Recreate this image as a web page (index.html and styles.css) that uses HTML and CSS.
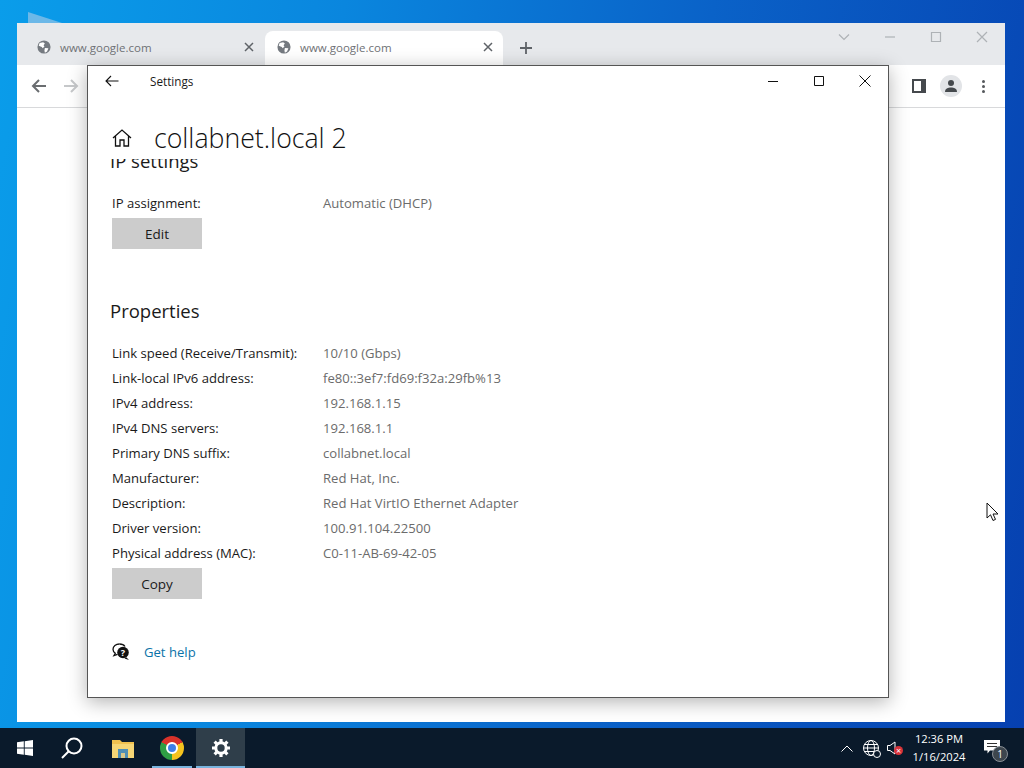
FILE: index.html
```html
<!DOCTYPE html>
<html lang="en">
<head>
    <meta charset="UTF-8">
    <meta name="viewport" content="width=device-width, initial-scale=1.0">
    <title>Settings - collabnet.local 2</title>
    <link rel="stylesheet" href="styles.css">
</head>
<body>

    <div class="desktop">
        <div class="wallpaper-shard"></div>

        <!-- Browser behind settings -->
        <div class="browser">
            <div class="tabstrip">
                <div class="tab">
                    <svg class="favicon" viewBox="0 0 16 16"><circle cx="8" cy="8" r="7.5" fill="#757a80"/><path d="M3 3.5 7 2.5 9 4 7.5 6 8.5 7.5 6.5 9.5 5.5 8 2 6.5ZM9 9 13 9.500 11.500 13 9 14.500 8.500 12Z" fill="#fff"/></svg>
                    <span class="tab-title">www.google.com</span>
                    <svg class="tab-close" viewBox="0 0 10 10"><path d="M1 1 9 9M9 1 1 9"/></svg>
                </div>
                <div class="tab tab-active">
                    <svg class="favicon" viewBox="0 0 16 16"><circle cx="8" cy="8" r="7.500" fill="#757a80"/><path d="M3 3.500 7 2.500 9 4 7.500 6 8.500 7.500 6.500 9.500 5.500 8 2 6.500ZM9 9 13 9.500 11.500 13 9 14.500 8.500 12Z" fill="#fff"/></svg>
                    <span class="tab-title">www.google.com</span>
                    <svg class="tab-close" viewBox="0 0 10 10"><path d="M1 1 9 9M9 1 1 9"/></svg>
                </div>
                <svg class="new-tab" viewBox="0 0 12 12"><path d="M6 0V12M0 6H12"/></svg>
                <div class="browser-controls">
                    <svg class="ctl" viewBox="0 0 12 12"><path d="M1 3.500 6 8.500 11 3.500"/></svg>
                    <svg class="ctl" viewBox="0 0 12 12"><path d="M1 6H11"/></svg>
                    <svg class="ctl" viewBox="0 0 12 12"><path d="M1.500 1.500H10.500V10.500H1.500Z"/></svg>
                    <svg class="ctl" viewBox="0 0 12 12"><path d="M1 1 11 11M11 1 1 11"/></svg>
                </div>
            </div>
            <div class="toolbar">
                <svg class="nav-arrow" viewBox="0 0 16 16"><path d="M15 8H2M8 2 2 8 8 14"/></svg>
                <svg class="nav-arrow nav-off" viewBox="0 0 16 16"><path d="M1 8H14M8 2 14 8 8 14"/></svg>
                <div class="toolbar-right">
                    <svg class="side-panel" viewBox="0 0 14 14"><path d="M0 0H14V14H0ZM2 2V12H9V2Z" fill-rule="evenodd"/></svg>
                    <div class="avatar">
                        <svg viewBox="0 0 14 14"><circle cx="7" cy="4" r="3"/><path d="M1 13C1 9.500 4 8.500 7 8.500S13 9.500 13 13Z"/></svg>
                    </div>
                    <div class="kebab"><i></i><i></i><i></i></div>
                </div>
            </div>
            <div class="browser-page"></div>
        </div>

        <!-- Settings window -->
        <div class="settings">
            <div class="titlebar">
                <svg class="title-back" viewBox="0 0 14 12"><path d="M13.500 6H1M6 1 1 6 6 11"/></svg>
                <span class="title-text">Settings</span>
                <div class="window-controls">
                    <svg viewBox="0 0 12 12"><path d="M1 6.500H11"/></svg>
                    <svg viewBox="0 0 12 12"><path d="M1.500 1.500H10.500V10.500H1.500Z"/></svg>
                    <svg viewBox="0 0 12 12"><path d="M.5.500 11.500 11.500M11.500.500.500 11.500"/></svg>
                </div>
            </div>
            <div class="page-header">
                <svg class="home-icon" viewBox="0 0 20 20"><path d="M1 10 10 2 19 10M3.500 8V18H8V12H12V18H16.500V8"/></svg>
                <h1>collabnet.local 2</h1>
            </div>
            <div class="scroller">
                <h2 class="section-clipped">IP settings</h2>
                <div class="rows">
                    <span>IP assignment:</span><span class="val">Automatic (DHCP)</span>
                </div>
                <button class="btn">Edit</button>

                <h2 class="section-props">Properties</h2>
                <div class="rows">
                    <span>Link speed (Receive/Transmit):</span><span class="val">10/10 (Gbps)</span>
                    <span>Link-local IPv6 address:</span><span class="val">fe80::3ef7:fd69:f32a:29fb%13</span>
                    <span>IPv4 address:</span><span class="val">192.168.1.15</span>
                    <span>IPv4 DNS servers:</span><span class="val">192.168.1.1</span>
                    <span>Primary DNS suffix:</span><span class="val">collabnet.local</span>
                    <span>Manufacturer:</span><span class="val">Red Hat, Inc.</span>
                    <span>Description:</span><span class="val">Red Hat VirtIO Ethernet Adapter</span>
                    <span>Driver version:</span><span class="val">100.91.104.22500</span>
                    <span>Physical address (MAC):</span><span class="val">C0-11-AB-69-42-05</span>
                </div>
                <button class="btn">Copy</button>

                <div class="help">
                    <svg class="help-icon" viewBox="0 0 18 18"><path d="M7.500 1C3.800 1 1 3.300 1 6.300 1 8 1.900 9.400 3.300 10.300L2 12.500 5.500 11.300" fill="none" stroke="#111" stroke-width="1.300"/><path d="M7.500 1C10 1 12 2 13 3.500" fill="none" stroke="#111" stroke-width="1.300"/><circle cx="11" cy="9.500" r="5.800" fill="#111"/><path d="M14 14 17 17 12.500 15.500Z" fill="#111"/><text x="11" y="12.500" class="help-q">?</text></svg>
                    <a href="#" class="help-link">Get help</a>
                </div>
            </div>
        </div>

        <svg class="cursor" viewBox="0 0 13 20"><path d="M1 1V16L4.500 12.800 7 18.500 9.500 17.400 7 12H12Z" fill="#fff" stroke="#111" stroke-width="1"/></svg>
    </div>

    <!-- Taskbar -->
    <div class="taskbar">
        <div class="task-item">
            <svg class="win-logo" viewBox="0 0 16 16"><path d="M0 2.300 6.800 1.300V7.600H0ZM7.700 1.200 16 0V7.600H7.700ZM0 8.400H6.800V14.700L0 13.700ZM7.700 8.400H16V16L7.700 14.800Z"/></svg>
        </div>
        <div class="task-item">
            <svg class="search-icon" viewBox="0 0 22 22"><circle cx="13" cy="9" r="7.500"/><path d="M7.500 14.500 1 21"/></svg>
        </div>
        <div class="task-item">
            <svg class="folder-icon" viewBox="0 0 22 19"><path d="M0 1H8L10 3H22V19H0Z" fill="#f0c14f"/><path d="M0 5H22V19H0Z" fill="#f6d675"/><path d="M6 10H16V19H6Z" fill="#4f8fb5"/><path d="M9 14H13V19H9Z" fill="#d9c88a"/></svg>
        </div>
        <div class="task-item task-open">
            <div class="chrome-logo"><div class="chrome-eye"></div></div>
        </div>
        <div class="task-item task-active">
            <svg class="gear-icon" viewBox="0 0 20 20"><circle cx="10" cy="10" r="5.200" fill="none" stroke="#fff" stroke-width="3"/><path d="M10 1V4M10 16V19M1 10H4M16 10H19M3.600 3.600 5.800 5.800M14.200 14.200 16.400 16.400M16.400 3.600 14.200 5.800M5.800 14.200 3.600 16.400" stroke="#fff" stroke-width="3.200"/></svg>
        </div>

        <div class="tray">
            <svg class="tray-chevron" viewBox="0 0 12 7"><path d="M.5 6.500 6 1 11.500 6.500"/></svg>
            <div class="tray-globe">
                <svg viewBox="0 0 18 18"><circle cx="9" cy="9" r="7.500"/><ellipse cx="9" cy="9" rx="3.500" ry="7.500"/><path d="M1.500 9H16.500M2.500 5.500H15.500M2.500 12.500H15.500"/></svg>
                <span class="globe-badge"></span>
            </div>
            <div class="tray-sound">
                <svg viewBox="0 0 10 14"><path d="M.5 4.500H3L8 1V13L3 9.500H.5Z"/></svg>
                <span class="sound-badge">×</span>
            </div>
            <div class="clock">
                <span>12:36 PM</span>
                <span>1/16/2024</span>
            </div>
            <div class="notify">
                <svg viewBox="0 0 16 14"><path d="M0 0H16V10.500H6L3.500 13.500V10.500H0Z" fill="#fff"/><path d="M3 3.500H13M3 6.500H13" stroke="#333" stroke-width="1"/></svg>
                <span class="notify-badge">1</span>
            </div>
        </div>
    </div>

</body>
</html>
```

FILE: styles.css
```css
* {
    box-sizing: border-box;
}

html, body {
    margin: 0;
    height: 100%;
    overflow: hidden;
}

body {
    display: flex;
    flex-direction: column;
    width: 1024px;
    height: 768px;
    font-family: "Open Sans", "Noto Sans", sans-serif;
    color: #1a1a1a;
}

/* Desktop - windows are placed on it freely */
.desktop {
    position: relative;
    height: 728px;
    background: linear-gradient(100deg, #0a9dea 0%, #0a86de 30%, #0a62c8 62%, #0640b0 100%);
}

.wallpaper-shard {
    position: absolute;
    left: 28px;
    top: 12px;
    width: 34px;
    height: 11px;
    background: #6cb8e8;
    clip-path: polygon(0 0, 100% 100%, 0 100%);
}

.browser {
    position: absolute;
    left: 17px;
    top: 23px;
    width: 988px;
    height: 699px;
    background: #fff;
    display: flex;
    flex-direction: column;
}

.tabstrip {
    height: 42px;
    background: #e7e9ec;
    display: flex;
    align-items: flex-end;
    flex-shrink: 0;
}

.tab {
    width: 248px;
    height: 34px;
    display: flex;
    align-items: center;
    padding: 0 11px 2px 20px;
    font-size: 11.5px;
    color: #6f7276;
}

.tab-active {
    width: 238px;
    background: #fff;
    border-radius: 8px 8px 0 0;
    padding-left: 12px;
    padding-right: 10px;
}

.favicon {
    width: 14px;
    height: 14px;
    margin-right: 9px;
    flex-shrink: 0;
}

.tab-title {
    flex: 1;
}

.tab-close {
    width: 10px;
    height: 10px;
    fill: none;
    stroke: #5f6368;
    stroke-width: 1.5;
}

.new-tab {
    width: 12px;
    height: 12px;
    margin: 0 0 11px 17px;
    fill: none;
    stroke: #5f6368;
    stroke-width: 1.8;
}

.browser-controls {
    margin-left: auto;
    display: flex;
    align-self: flex-start;
    gap: 34px;
    padding: 8px 17px 0 0;
}

.ctl {
    width: 12px;
    height: 12px;
    fill: none;
    stroke: #aeb2b6;
    stroke-width: 1.2;
}

.toolbar {
    height: 43px;
    flex-shrink: 0;
    display: flex;
    align-items: center;
    gap: 16px;
    padding: 0 20px 0 14px;
    border-bottom: 1px solid #d8d9db;
}

.nav-arrow {
    width: 16px;
    height: 16px;
    fill: none;
    stroke: #6a6d70;
    stroke-width: 2;
}

.nav-off {
    stroke: #c6c8ca;
}

.toolbar-right {
    margin-left: auto;
    display: flex;
    align-items: center;
}

.side-panel {
    width: 14px;
    height: 14px;
    fill: #45494d;
    margin-right: 14px;
}

.avatar {
    width: 22px;
    height: 22px;
    border-radius: 50%;
    background: #e2e4e7;
    display: flex;
    align-items: center;
    justify-content: center;
    margin-right: 20px;
}

.avatar svg {
    width: 14px;
    height: 14px;
    fill: #45494d;
}

.kebab {
    display: flex;
    flex-direction: column;
    gap: 2px;
}

.kebab i {
    width: 3px;
    height: 3px;
    border-radius: 50%;
    background: #55585c;
}

.browser-page {
    flex: 1;
}

/* Settings window */
.settings {
    position: absolute;
    left: 87px;
    top: 65px;
    width: 802px;
    height: 633px;
    background: #fff;
    border: 1px solid #555;
    box-shadow: 0 4px 18px rgba(0, 0, 0, 0.3);
    display: flex;
    flex-direction: column;
}

.titlebar {
    height: 29px;
    display: flex;
    align-items: center;
    flex-shrink: 0;
}

.title-back {
    width: 14px;
    height: 12px;
    margin: 1px 0 0 17px;
    fill: none;
    stroke: #111;
    stroke-width: 1.1;
}

.title-text {
    margin-left: 31px;
    font-size: 11.7px;
}

.window-controls {
    margin-left: auto;
    display: flex;
    gap: 34px;
    padding-right: 17px;
}

.window-controls svg {
    width: 12px;
    height: 12px;
    fill: none;
    stroke: #111;
    stroke-width: 1;
}

.page-header {
    height: 64px;
    flex-shrink: 0;
    display: flex;
    align-items: flex-start;
    padding: 25px 0 0 24px;
}

.home-icon {
    width: 20px;
    height: 20px;
    margin-top: 8px;
    fill: none;
    stroke: #111;
    stroke-width: 1.3;
}

h1 {
    margin: 0 0 0 22px;
    font-size: 26.7px;
    font-weight: 300;
    line-height: 36px;
    color: #111;
}

.scroller {
    flex: 1;
    overflow: hidden;
    padding-left: 24px;
    font-size: 13.1px;
}

h2 {
    margin: 0 0 0 -2px;
    font-size: 18.5px;
    font-weight: 400;
    line-height: 27px;
}

.section-clipped {
    margin-top: -12px;
    margin-bottom: 16px;
}

.section-props {
    margin-top: 48px;
    margin-bottom: 16px;
}

.rows {
    display: grid;
    grid-template-columns: 211px 1fr;
    grid-auto-rows: 25px;
    align-items: center;
}

.val {
    color: #6b6b6b;
}

.btn {
    display: block;
    width: 90px;
    height: 31px;
    margin-top: 3px;
    padding: 0;
    border: none;
    background: #cccccc;
    color: #1a1a1a;
    font-family: inherit;
    font-size: 13.5px;
}

.help {
    display: flex;
    align-items: center;
    height: 24px;
    margin-top: 41px;
}

.help-icon {
    width: 18px;
    height: 18px;
    margin-right: 14px;
}

.help-q {
    font-size: 9px;
    font-weight: 700;
    fill: #fff;
    text-anchor: middle;
}

.help-link {
    color: #0a72a8;
    text-decoration: none;
}

.cursor {
    position: absolute;
    left: 986px;
    top: 502px;
    width: 13px;
    height: 20px;
}

/* Taskbar */
.taskbar {
    height: 40px;
    background: #0a1a2b;
    display: flex;
    flex-shrink: 0;
}

.task-item {
    width: 49px;
    height: 40px;
    display: flex;
    align-items: center;
    justify-content: center;
}

.task-open {
    background: linear-gradient(#79b4de, #79b4de) center bottom / 40px 2px no-repeat;
}

.task-active {
    background: #2f3e4a;
    box-shadow: inset 0 -2px 0 #79b4de;
}

.win-logo {
    width: 16px;
    height: 16px;
    fill: #fff;
}

.search-icon {
    width: 22px;
    height: 22px;
    margin-left: -4px;
    fill: none;
    stroke: #fff;
    stroke-width: 2;
}

.folder-icon {
    width: 22px;
    height: 19px;
}

.chrome-logo {
    width: 24px;
    height: 24px;
    border-radius: 50%;
    background: conic-gradient(#d9322a 0 60deg, #f5c31e 60deg 180deg, #2f9e44 180deg 300deg, #d9322a 300deg);
    display: flex;
    align-items: center;
    justify-content: center;
}

.chrome-eye {
    width: 12px;
    height: 12px;
    border-radius: 50%;
    background: #3f7fe8;
    border: 2px solid #fff;
}

.gear-icon {
    width: 20px;
    height: 20px;
}

.tray {
    margin-left: auto;
    display: flex;
    align-items: center;
    color: #fff;
}

.tray-chevron {
    width: 12px;
    height: 7px;
    fill: none;
    stroke: #fff;
    stroke-width: 1;
}

.tray-globe {
    position: relative;
    width: 18px;
    height: 18px;
    margin-left: 9px;
}

.tray-globe svg {
    display: block;
    fill: none;
    stroke: #fff;
    stroke-width: 1;
}

.globe-badge {
    position: absolute;
    right: -1px;
    bottom: -1px;
    width: 8px;
    height: 8px;
    border-radius: 50%;
    background: #0a1a2b;
    border: 1px solid #fff;
}

.tray-sound {
    position: relative;
    width: 10px;
    height: 14px;
    margin-left: 7px;
}

.tray-sound svg {
    display: block;
    fill: none;
    stroke: #fff;
    stroke-width: 1;
}

.sound-badge {
    position: absolute;
    left: 7px;
    top: 5px;
    width: 9px;
    height: 9px;
    border-radius: 50%;
    background: #d8333a;
    font-size: 9px;
    line-height: 9px;
    text-align: center;
}

.clock {
    width: 64px;
    margin-left: 10px;
    display: flex;
    flex-direction: column;
    align-items: center;
    gap: 2px;
    font-size: 11.2px;
    line-height: 16px;
}

.notify {
    position: relative;
    width: 16px;
    height: 14px;
    margin: -2px 24px 0 13px;
}

.notify svg {
    display: block;
}

.notify-badge {
    position: absolute;
    left: 8px;
    top: 6px;
    width: 16px;
    height: 16px;
    border-radius: 50%;
    background: #3d464e;
    border: 1px solid #8a9097;
    font-size: 10px;
    line-height: 14px;
    text-align: center;
}
```
